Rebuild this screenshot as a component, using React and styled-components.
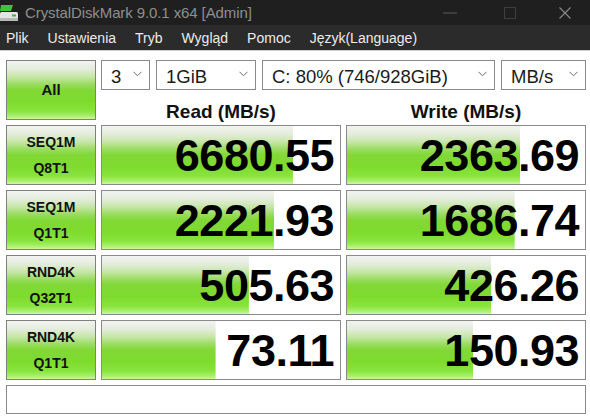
import React from 'react';
import styled, { createGlobalStyle } from 'styled-components';

const Global = createGlobalStyle`
  html, body { margin: 0; padding: 0; background: #ffffff; }
  body { font-family: "Liberation Sans", Arial, sans-serif; }
  #root { width: 590px; height: 416px; overflow: hidden; }
`;

const greenGradient = `linear-gradient(180deg,
  #f2f4f0 0%, #e4ecdc 14%, #c4e6a4 28%, #9adc60 40%, #82d836 50%,
  #7edb2e 70%, #88e43c 86%, #aaef6e 95%, #cbf89e 100%)`;

const Window = styled.div`
  width: 590px;
  height: 416px;
  display: flex;
  flex-direction: column;
  background: #ffffff;
`;

const TitleBar = styled.div`
  height: 25px;
  background: #1f1f1f;
  display: flex;
  align-items: center;
  flex-shrink: 0;
`;

const AppIcon = styled.svg`
  width: 20px;
  height: 20px;
  flex-shrink: 0;
`;

const TitleText = styled.div`
  margin-left: 5px;
  font-size: 15px;
  color: #8f8f8f;
  white-space: nowrap;
  letter-spacing: -0.1px;
`;

const Controls = styled.div`
  margin-left: auto;
  display: flex;
  height: 100%;
`;

const ControlButton = styled.div`
  width: ${p => p.$w}px;
  height: 100%;
  display: flex;
  align-items: center;
  justify-content: center;
`;

const MenuBar = styled.div`
  height: 25px;
  background: #2b2b2b;
  border-bottom: 1px solid #cfcfcf;
  display: flex;
  align-items: center;
  gap: 19px;
  padding-left: 6px;
  flex-shrink: 0;
`;

const MenuItem = styled.span`
  font-size: 14px;
  color: #ececec;
  white-space: nowrap;
`;

const Main = styled.div`
  display: flex;
  flex-direction: column;
  gap: 5px;
  padding: 9px 4px 0 6px;
`;

const Grid = styled.div`
  display: grid;
  grid-template-columns: 90px 240px 240px;
  column-gap: 5px;
  grid-template-rows: ${p => p.$rows};
`;

const GreenButton = styled.div`
  grid-row: ${p => p.$span || 'auto'};
  box-sizing: border-box;
  border: 1px solid #808080;
  background: ${greenGradient};
  display: flex;
  flex-direction: column;
  align-items: center;
  justify-content: center;
  font-weight: bold;
  font-size: ${p => p.$size || 14}px;
  line-height: 26px;
  color: #111;
`;

const SelectRow = styled.div`
  grid-column: 2 / 4;
  display: flex;
  gap: 6px;
`;

const Select = styled.div`
  box-sizing: border-box;
  width: ${p => p.$w}px;
  height: 30px;
  border: 1px solid #8a8a8a;
  background: #fff;
  display: flex;
  align-items: center;
  justify-content: space-between;
  padding: 4px 7px 0 9px;
  font-size: 18.5px;
  color: #1a1a1a;
  white-space: nowrap;
`;

const Chevron = styled.svg`
  width: 9px;
  height: 6px;
  margin-top: -6px;
  flex-shrink: 0;
`;

const Header = styled.div`
  text-align: center;
  font-weight: bold;
  font-size: 19px;
  line-height: 19px;
  padding-top: 12px;
  color: #111;
`;

const ValueBox = styled.div`
  box-sizing: border-box;
  height: 60px;
  border: 1px solid #8a8a8a;
  background-color: #ffffff;
  background-image: ${greenGradient};
  background-repeat: no-repeat;
  display: flex;
  align-items: center;
  justify-content: flex-end;
  padding-right: 6px;
  font-weight: bold;
  font-size: 45px;
  line-height: 1;
  letter-spacing: -0.5px;
  color: #000;
`;

const StatusBar = styled.div`
  box-sizing: border-box;
  height: 29px;
  border: 1px solid #8a8a8a;
  background: #fff;
`;

const rows = [
  { a: 'SEQ1M', b: 'Q8T1', r: '6680.55', w: '2363.69' },
  { a: 'SEQ1M', b: 'Q1T1', r: '2221.93', w: '1686.74' },
  { a: 'RND4K', b: 'Q32T1', r: '505.63', w: '426.26' },
  { a: 'RND4K', b: 'Q1T1', r: '73.11', w: '150.93' },
];

const pct = v => Math.max(0, Math.min(100, ((Math.log10(parseFloat(v)) + 1) / 6) * 100));

const ChevronIcon = () => (
  <Chevron viewBox="0 0 9 6">
    <path d="M0.5 0.8 L4.5 4.8 L8.5 0.8" fill="none" stroke="#6a6a6a" strokeWidth="1" />
  </Chevron>
);

const Value = ({ v }) => (
  <ValueBox style={{ backgroundSize: `${pct(v)}% 100%` }}>{v}</ValueBox>
);

export default function App() {
  return (
    <Window>
      <Global />
      <TitleBar>
        <AppIcon viewBox="0 0 20 20">
          <path d="M1 2 L13 2 L11 8 L0 8 Z" fill="#3cc43c" />
          <rect x="0" y="9" width="18" height="9" rx="1.5" fill="#e4e4e4" />
          <rect x="0" y="15" width="18" height="3" fill="#b8b8b8" />
          <rect x="12" y="11.5" width="4" height="2" fill="#38b838" />
        </AppIcon>
        <TitleText>CrystalDiskMark 9.0.1 x64 [Admin]</TitleText>
        <Controls>
          <ControlButton $w={60}>
            <svg width="14" height="2" viewBox="0 0 14 2"><rect x="0" y="0.5" width="14" height="1" fill="#5c5c5c" /></svg>
          </ControlButton>
          <ControlButton $w={60}>
            <svg width="12" height="12" viewBox="0 0 12 12"><rect x="0.5" y="0.5" width="11" height="11" fill="none" stroke="#3e3e3e" /></svg>
          </ControlButton>
          <ControlButton $w={50}>
            <svg width="12" height="12" viewBox="0 0 12 12"><path d="M0.5 0.5 L11.5 11.5 M11.5 0.5 L0.5 11.5" stroke="#8c8c8c" strokeWidth="1.1" /></svg>
          </ControlButton>
        </Controls>
      </TitleBar>
      <MenuBar>
        <MenuItem>Plik</MenuItem>
        <MenuItem>Ustawienia</MenuItem>
        <MenuItem>Tryb</MenuItem>
        <MenuItem>Wygląd</MenuItem>
        <MenuItem>Pomoc</MenuItem>
        <MenuItem>Język(Language)</MenuItem>
      </MenuBar>
      <Main>
        <Grid $rows="30px 30px">
          <GreenButton $span="1 / 3" $size={15}>All</GreenButton>
          <SelectRow>
            <Select $w={49}>3<ChevronIcon /></Select>
            <Select $w={100}>1GiB<ChevronIcon /></Select>
            <Select $w={233}>C: 80% (746/928GiB)<ChevronIcon /></Select>
            <Select $w={85}>MB/s<ChevronIcon /></Select>
          </SelectRow>
          <Header>Read (MB/s)</Header>
          <Header>Write (MB/s)</Header>
        </Grid>
        {rows.map((row, i) => (
          <Grid key={i} $rows="60px">
            <GreenButton>
              <span>{row.a}</span>
              <span>{row.b}</span>
            </GreenButton>
            <Value v={row.r} />
            <Value v={row.w} />
          </Grid>
        ))}
        <StatusBar />
      </Main>
    </Window>
  );
}
